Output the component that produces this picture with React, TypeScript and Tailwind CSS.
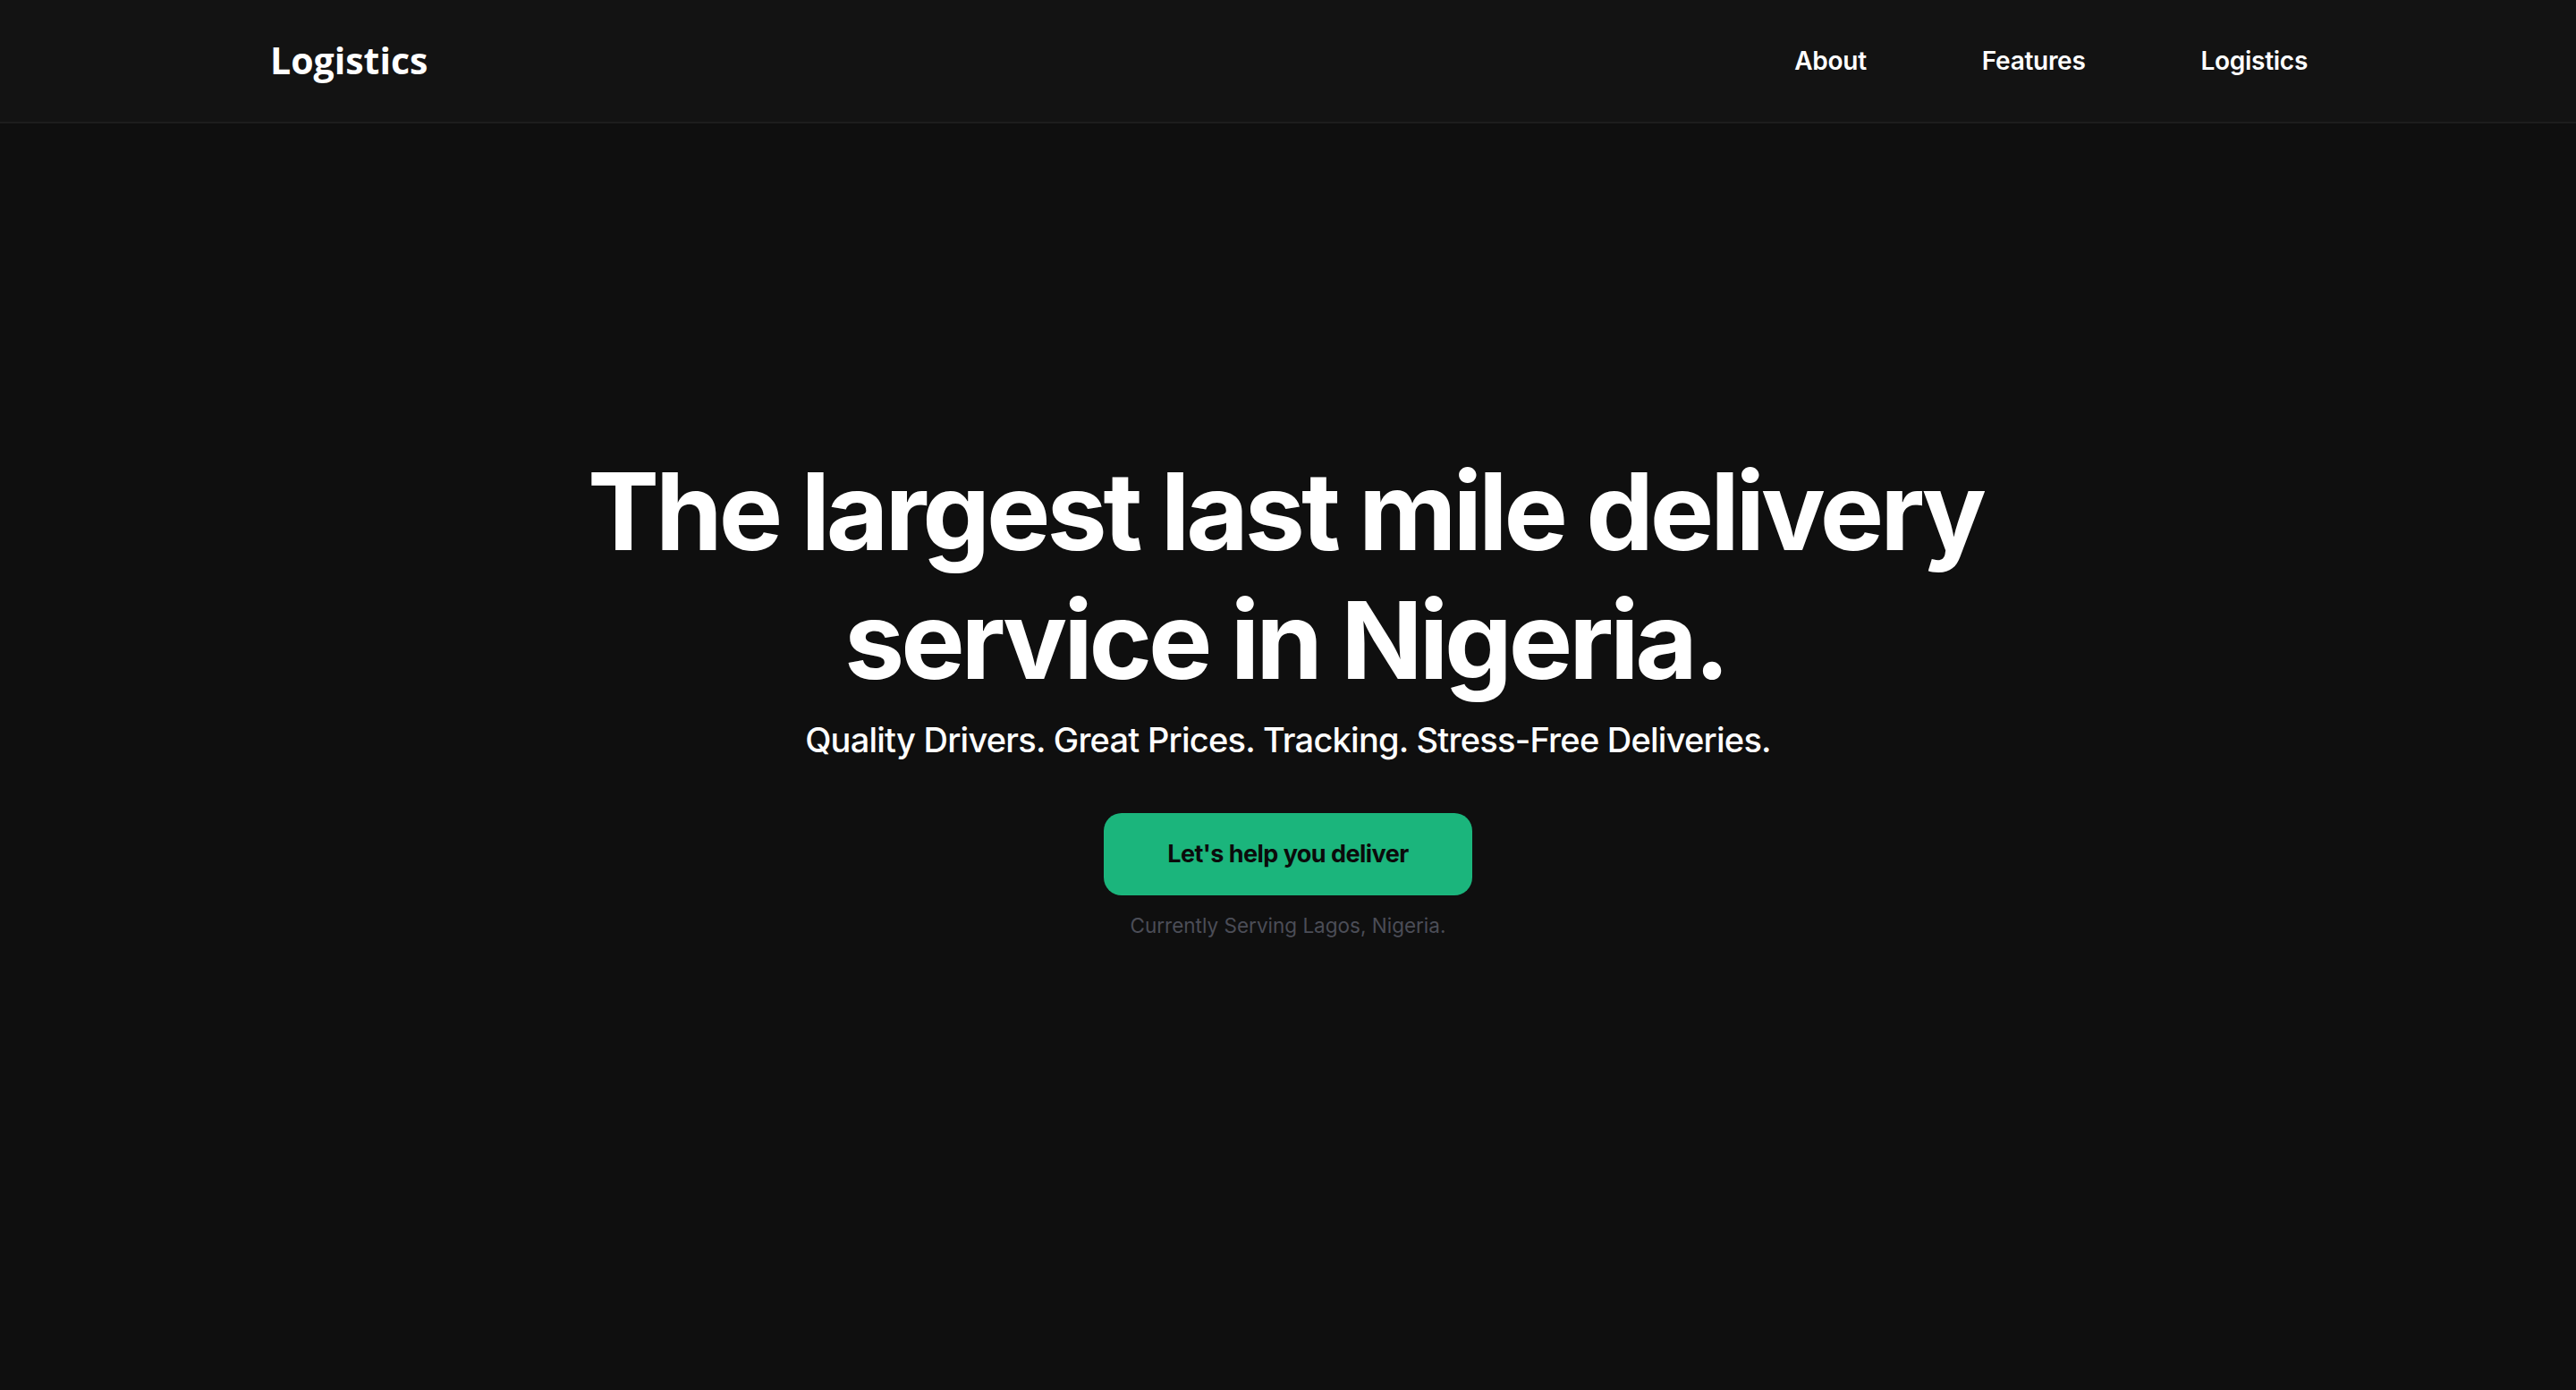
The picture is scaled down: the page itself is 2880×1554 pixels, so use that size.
import React from 'react';

const navLinks = ['About', 'Features', 'Logistics'];

export default function App() {
  return (
    <div className="min-h-screen bg-[#0f0f0f] text-white font-['Inter',sans-serif]">
      {/* Top bar */}
      <header className="h-[138px] bg-[#131313] border-b-2 border-[#1d1d1d]">
        <div className="h-full pl-[302px] pr-[300px] flex items-center justify-between">
          <a href="#" className="font-['Open_Sans',sans-serif] text-[41px] font-bold leading-none text-white pb-[2px]">
            Logistics
          </a>
          <nav className="flex items-center gap-[129px]">
            {navLinks.map((link) => (
              <a key={link} href="#" className="text-[28px] font-semibold tracking-[-0.01em] text-white leading-none">
                {link}
              </a>
            ))}
          </nav>
        </div>
      </header>

      {/* Hero */}
      <main className="flex flex-col items-center pt-[362px] pb-[300px]">
        <h1 className="text-[120px] font-bold leading-[1.2] tracking-[-0.034em] text-center pr-[6px]">
          The largest last mile delivery
          <br />
          service in Nigeria.
        </h1>
        <p className="mt-[17px] text-[38px] font-medium leading-[1.2] tracking-[-0.02em] text-white">
          Quality Drivers. Great Prices. Tracking. Stress-Free Deliveries.
        </p>
        <button className="mt-[58px] h-[92px] w-[412px] rounded-[20px] bg-[#1bb57c] pt-[2px] text-[27px] font-bold tracking-[-0.02em] text-[#0b0b0b]">
          Let's help you deliver
        </button>
        <p className="mt-[17px] text-[22.5px] leading-[1.5] text-[#4b4d57]">
          Currently Serving Lagos, Nigeria.
        </p>
      </main>
    </div>
  );
}
